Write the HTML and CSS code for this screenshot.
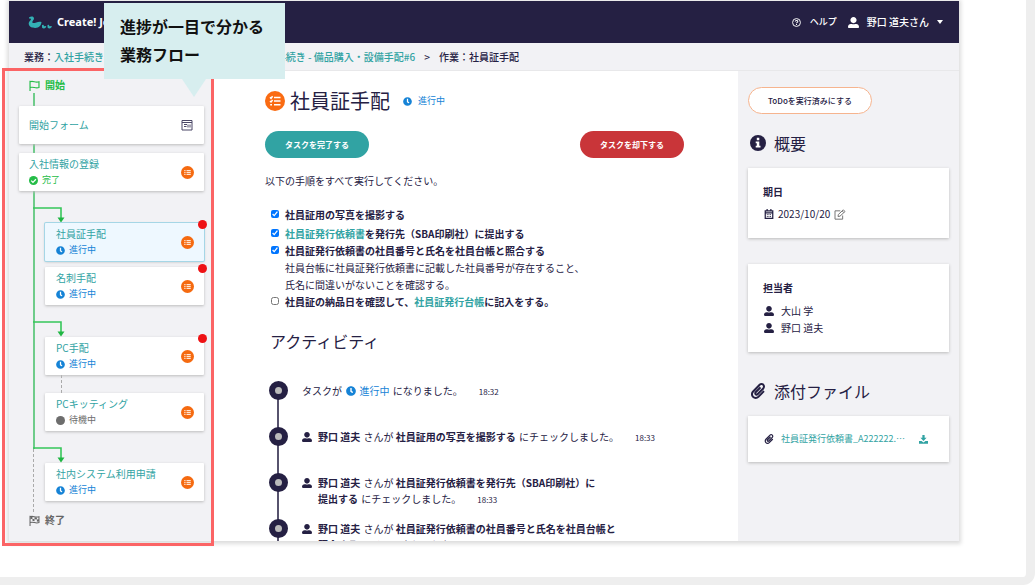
FILE: index.html
```html
<!DOCTYPE html>
<html lang="ja">
<head>
<meta charset="utf-8">
<meta name="viewport" content="width=device-width, initial-scale=1">
<title>社員証手配</title>
<link rel="stylesheet" href="styles.css">
</head>
<body>
<svg class="defs" aria-hidden="true">
  <symbol id="user" viewBox="0 0 512 512"><path d="M256 288c79.500 0 144-64.500 144-144S335.500 0 256 0 112 64.500 112 144s64.500 144 144 144zm128 32h-55.100c-22.200 10.200-46.900 16-72.900 16s-50.600-5.800-72.900-16H128C57.300 320 0 377.300 0 448v16c0 26.500 21.500 48 48 48h416c26.500 0 48-21.500 48-48v-16c0-70.700-57.300-128-128-128z"/></symbol>
  <symbol id="clock" viewBox="0 0 512 512"><path d="M256 8C119 8 8 119 8 256s111 248 248 248 248-111 248-248S393 8 256 8zm57.100 350.100L224.900 294c-3.100-2.300-4.900-5.900-4.900-9.700V116c0-6.600 5.400-12 12-12h48c6.600 0 12 5.400 12 12v137.700l63.500 46.200c5.400 3.900 6.500 11.400 2.600 16.800l-28.200 38.800c-3.900 5.300-11.400 6.500-16.800 2.600z"/></symbol>
  <symbol id="check" viewBox="0 0 16 16"><circle cx="8" cy="8" r="8"/><path d="M4 8.300l3 3 5.300-5.600" fill="none" stroke="#fff" stroke-width="2.200"/></symbol>
  <symbol id="dot" viewBox="0 0 16 16"><circle cx="8" cy="8" r="8"/></symbol>
  <symbol id="tasks" viewBox="0 0 20 20"><circle cx="10" cy="10" r="10" fill="#fa6b12"/><path d="M5 6.300l1 1 1.600-2M5 10l1 1 1.600-2M9 6.500h6.500M9 10h6.500M9 13.700h6.500M5.200 13.700h1.800" fill="none" stroke="#fff" stroke-width="1.500"/></symbol>
  <symbol id="tasks-small" viewBox="0 0 20 20"><circle cx="10" cy="10" r="10" fill="#f56a10"/><path d="M5 7h2M5 10h2M5 13h2M8.500 7H15M8.500 10H15M8.500 13H15" fill="none" stroke="#ffe6d4" stroke-width="1.800"/></symbol>
  <symbol id="clip" viewBox="0 0 448 512"><path d="M43.246 466.142c-58.430-60.289-57.341-157.511 1.386-217.581L254.392 34c44.316-45.332 116.351-45.336 160.671 0 43.890 44.894 43.943 117.329 0 162.276L232.214 383.128c-29.855 30.537-78.633 30.111-107.982-.998-28.275-29.970-27.368-77.473 1.452-106.953l143.743-146.835c6.182-6.314 16.312-6.422 22.626-.241l22.861 22.379c6.315 6.182 6.422 16.312.241 22.626L171.427 319.927c-4.932 5.045-5.236 13.428-.648 18.292 4.372 4.634 11.245 4.711 15.688.165l182.849-186.851c19.613-20.062 19.613-52.725-.011-72.798-19.189-19.627-49.957-19.637-69.154 0L90.390 293.295c-34.763 35.560-35.299 93.120-1.191 128.313 34.010 35.093 88.985 35.137 123.058.286l172.060-175.999c6.177-6.319 16.307-6.433 22.626-.256l22.877 22.364c6.319 6.177 6.434 16.307.256 22.626l-172.060 175.998c-59.576 60.938-155.943 60.216-214.770-.485z"/></symbol>
  <symbol id="connector" viewBox="0 0 46 32"><path d="M14 17H42V27" fill="none" stroke="#36c65a" stroke-width="1.600"/><path d="M38.500 26.500h7L42 31.500z" fill="#1fb643"/></symbol>
</svg>

<div class="frame">
  <div class="app">
    <header class="topbar">
      <a class="brand" href="#">
        <svg class="logo" viewBox="0 0 25 13" aria-hidden="true"><path d="M1 1.500C3 0 6 .2 6 2.600c0 1.400-1.600 2.300-1.700 3.500 0 1.600 2 1 4 .3 1.700-.5 3.400-1 5.200-.3-.3 3.500-2.500 5.900-6.300 5.900C3.300 12 .6 10.300.7 7.300.8 5.400 3 4.500 3 3.300 3 2.500 2 2.300 1 2.500zM14 9l1.500-.2.500 1.500 2.200-.3c0 1.600-.9 2.400-2.400 2.400-1.200 0-2-.8-1.800-2zM19.500 9l1.400-.2.500 1.500 2.400-.3c0 1.600-1 2.400-2.400 2.400-1.300 0-2-.8-1.900-2z"/></svg>
        <span>Create! Job</span>
      </a>
      <nav class="usernav">
        <a class="help" href="#"><svg class="i9" viewBox="0 0 16 16" aria-hidden="true"><circle cx="8" cy="8" r="7" fill="none" stroke="currentColor" stroke-width="1.700"/><path d="M5.700 6.300C5.800 3.600 10.400 3.700 10.300 6.300 10.200 7.800 8 7.900 8 9.500M8 10.700v1.700" fill="none" stroke="currentColor" stroke-width="1.800"/></svg>ヘルプ</a>
        <button class="account" type="button"><svg class="i11"><use href="#user"/></svg>野口 道夫さん<svg class="caret" viewBox="0 0 6 4"><path d="M0 0h6L3 4z"/></svg></button>
      </nav>
    </header>

    <nav class="crumbs">
      <span>業務：<a href="#">入社手続き - 備品購入・設備手配</a></span><span>&gt;</span>
      <span>業務：<a href="#">入社手続き - 備品購入・設備手配#6</a></span><span>&gt;</span>
      <span>作業：社員証手配</span>
    </nav>

    <div class="body">
      <section class="flow">
        <div class="trunk trunk-done">
          <div class="terminal start"><svg class="i11" viewBox="0 0 16 16"><path d="M1.500 1v15M1.500 2.500c5-2 7.500 2 13 0v8.500c-5.500 2-8-2-13 0" fill="none" stroke="currentColor" stroke-width="1.700"/></svg>開始</div>
          <div class="card form-card">
            <a class="card-title" href="#">開始フォーム</a>
            <svg class="form-icon" viewBox="0 0 12 12"><path d="M1 1.500h10v9.500H1zM1 3.500h10M3 5.500h3M3 7.500h2.500M7 5.500v3M9 5.500v3" fill="none" stroke="currentColor"/></svg>
          </div>
          <div class="card">
            <div><a class="card-title" href="#">入社情報の登録</a><div class="status done"><svg class="i9"><use href="#check"/></svg>完了</div></div>
            <svg class="i13"><use href="#tasks-small"/></svg>
          </div>
          <svg class="connector"><use href="#connector"/></svg>
          <div class="card sub selected">
            <div><a class="card-title" href="#">社員証手配</a><div class="status active"><svg class="i9"><use href="#clock"/></svg>進行中</div></div>
            <svg class="i13"><use href="#tasks-small"/></svg><i class="badge"></i>
          </div>
          <div class="card sub next">
            <div><a class="card-title" href="#">名刺手配</a><div class="status active"><svg class="i9"><use href="#clock"/></svg>進行中</div></div>
            <svg class="i13"><use href="#tasks-small"/></svg><i class="badge"></i>
          </div>
          <svg class="connector"><use href="#connector"/></svg>
          <div class="card sub">
            <div><a class="card-title" href="#">PC手配</a><div class="status active"><svg class="i9"><use href="#clock"/></svg>進行中</div></div>
            <svg class="i13"><use href="#tasks-small"/></svg><i class="badge"></i>
          </div>
          <div class="pending-link"></div>
          <div class="card sub">
            <div><a class="card-title" href="#">PCキッティング</a><div class="status waiting"><svg class="i9"><use href="#dot"/></svg>待機中</div></div>
            <svg class="i13"><use href="#tasks-small"/></svg>
          </div>
          <svg class="connector"><use href="#connector"/></svg>
        </div>
        <div class="trunk trunk-wait">
          <div class="card sub">
            <div><a class="card-title" href="#">社内システム利用申請</a><div class="status active"><svg class="i9"><use href="#clock"/></svg>進行中</div></div>
            <svg class="i13"><use href="#tasks-small"/></svg>
          </div>
          <div class="terminal end"><svg class="i11" viewBox="0 0 16 16"><path d="M1.500 1v15M1.500 2.500c5-2 7.500 2 13 0v8.500c-5.500 2-8-2-13 0" fill="none" stroke="currentColor" stroke-width="1.500"/><path d="M2 3l3-.5v3l3 .6v-3l3.500.6v3l3-.6v3l-3 .6v-3L8 6v3.200l-3-.9V5.500L2 6z" fill="currentColor"/></svg>終了</div>
        </div>
        <div class="callout">進捗が一目で分かる<br>業務フロー</div>
      </section>

      <main class="task">
        <div class="task-head">
          <svg class="i20"><use href="#tasks"/></svg>
          <h1>社員証手配</h1>
          <div class="status active"><svg class="i9"><use href="#clock"/></svg>進行中</div>
        </div>
        <div class="actions">
          <button class="btn btn-teal" type="button">タスクを完了する</button>
          <button class="btn btn-red" type="button">タスクを却下する</button>
        </div>
        <p class="intro">以下の手順をすべて実行してください。</p>
        <ul class="checks">
          <li><input type="checkbox" id="c1" checked><label for="c1">社員証用の写真を撮影する</label></li>
          <li><input type="checkbox" id="c2" checked><label for="c2"><a href="#">社員証発行依頼書</a>を発行先（SBA印刷社）に提出する</label></li>
          <li><input type="checkbox" id="c3" checked><div><label for="c3">社員証発行依頼書の社員番号と氏名を社員台帳と照合する</label><p>社員台帳に社員証発行依頼書に記載した社員番号が存在すること、<br>氏名に間違いがないことを確認する。</p></div></li>
          <li><input type="checkbox" id="c4"><label for="c4">社員証の納品日を確認して、<a href="#">社員証発行台帳</a>に記入をする。</label></li>
        </ul>
        <h2 class="activity-title">アクティビティ</h2>
        <ol class="timeline">
          <li><p>タスクが <svg class="i10 blue"><use href="#clock"/></svg> <span class="blue">進行中</span> になりました。<time>18:32</time></p></li>
          <li><svg class="i10"><use href="#user"/></svg><p><b>野口 道夫</b> さんが <b>社員証用の写真を撮影する</b> にチェックしました。<time>18:33</time></p></li>
          <li><svg class="i10"><use href="#user"/></svg><p><b>野口 道夫</b> さんが <b>社員証発行依頼書を発行先（SBA印刷社）に<br>提出する</b> にチェックしました。<time>18:33</time></p></li>
          <li><svg class="i10"><use href="#user"/></svg><p><b>野口 道夫</b> さんが <b>社員証発行依頼書の社員番号と氏名を社員台帳と<br>照合する</b> にチェックしました。<time>18:33</time></p></li>
        </ol>
      </main>

      <aside class="side">
        <button class="btn btn-outline" type="button">ToDoを実行済みにする</button>
        <h2><svg class="i16" viewBox="0 0 16 16"><circle cx="8" cy="8" r="8"/><path d="M6.800 2.800h2.500v2.400H6.800zM5.700 6.500h3.600v4.300h1.200v1.800H5.700v-1.800h1.100V8.300H5.700z" fill="#fff"/></svg>概要</h2>
        <section class="panel">
          <h3>期日</h3>
          <div class="due"><svg class="i10" viewBox="0 0 14 16"><path d="M1 3h12v12H1zM1 6h12M4 0v4M10 0v4" fill="none" stroke="currentColor" stroke-width="2"/><path d="M3.500 9h7M3.500 12h7" stroke="currentColor" stroke-width="1.400" stroke-dasharray="1.600 1"/></svg>2023/10/20<button class="edit" type="button" aria-label="編集"><svg class="i12" viewBox="0 0 18 16"><path d="M9.500 2.500H1.500v12.500h11.500V9.500M6 11l.5-3L14 1l2.500 2.500L9 10.500zM12.300 2.700l2.500 2.500" fill="none" stroke="currentColor" stroke-width="1.500"/></svg></button></div>
        </section>
        <section class="panel people">
          <h3>担当者</h3>
          <ul>
            <li><svg class="i10"><use href="#user"/></svg>大山 学</li>
            <li><svg class="i10"><use href="#user"/></svg>野口 道夫</li>
          </ul>
        </section>
        <h2><svg class="i16"><use href="#clip"/></svg>添付ファイル</h2>
        <section class="panel file">
          <svg class="i10"><use href="#clip"/></svg>
          <a href="#">社員証発行依頼書_A222222.⋯</a>
          <a class="download" href="#" aria-label="ダウンロード"><svg class="i9" viewBox="0 0 16 16"><path d="M6 0h4v5h3.500L8 10.500 2.500 5H6zM0 10.500h4.500L8 13.500l3.500-3H16V15.500H0z"/></svg></a>
        </section>
      </aside>
    </div>
  </div>
</div>
</body>
</html>
```
FILE: styles.css
```css
*, ::before, ::after { box-sizing: border-box; }

body {
  margin: 0;
  background: #fff;
  color: #252043;
  font: 10px/16px "Noto Sans CJK JP", sans-serif;
}

h1, h2, h3, p, ul, ol { margin: 0; padding: 0; }
ul, ol { list-style: none; }
a { color: #31a3a3; text-decoration: none; }
button { font: inherit; color: inherit; border: 0; background: none; padding: 0; }
svg { flex: none; fill: currentColor; }
.defs { display: none; }

.i9 { width: 9px; height: 9px; }
.i10 { width: 10px; height: 10px; }
.i11 { width: 11px; height: 11px; }
.i12 { width: 12px; height: 11px; }
.i13 { width: 13px; height: 13px; }
.i16 { width: 16px; height: 16px; }
.i20 { width: 20px; height: 20px; }
.blue { color: #1683d6; }

.frame {
  display: flex;
  height: calc(100vh - 3px);
  min-height: 480px;
  padding: 1px 67px 36px 9px;
  border: solid #eee;
  border-width: 0 9px 8px 0;
  border-radius: 0 0 12px 0;
}

.app {
  display: flex;
  flex: 1;
  flex-direction: column;
  min-width: 0;
  box-shadow: 0 1px 4px 2px #ddd;
}

.topbar {
  display: flex;
  flex: none;
  align-items: center;
  justify-content: space-between;
  height: 42px;
  padding: 0 16px 0 19px;
  background: #252043;
  color: #fff;
}
.brand { display: flex; align-items: center; gap: 4px; color: #fff; font: bold 11px/16px "Noto Sans", sans-serif; }
.logo { width: 25px; height: 13px; color: #33b1b5; }
.usernav { display: flex; gap: 11px; font-weight: 500; }
.help, .account { display: flex; align-items: center; color: #fff; }
.help { gap: 9px; font-size: 9px; }
.account { gap: 8px; }
.caret { width: 6px; height: 4px; }

.crumbs {
  display: flex;
  flex: none;
  gap: 9px;
  align-items: center;
  height: 28px;
  padding: 0 15px;
  border-bottom: 1px solid #e8e8ea;
  background: #f2f2f5;
  font-weight: 500;
  white-space: nowrap;
}

.body { display: flex; flex: 1; min-height: 0; background: #fff; }

/* Workflow column */
.flow {
  position: relative;
  flex: none;
  width: 203px;
  padding: 6px 8px 0 10px;
  background: #f2f2f5;
}
.flow::after {
  content: "";
  position: absolute;
  inset: -3px -2px -5px -7px;
  border: 3px solid #fb6465;
  pointer-events: none;
}
.trunk { position: relative; }
.trunk::before { content: ""; position: absolute; left: 14px; }
.trunk-done::before { top: 16px; bottom: 14px; width: 2px; background: #6fcc8a; }
.trunk-wait::before { top: -14px; bottom: 16px; border-left: 1px dashed #aaa; }

.terminal { display: flex; gap: 5px; align-items: center; padding-left: 10px; font-weight: bold; }
.start { color: #25bd48; }
.end { margin-top: 11px; color: #666; }

.card {
  position: relative;
  display: flex;
  align-items: center;
  justify-content: space-between;
  height: 38px;
  padding: 0 10px;
  border-radius: 1px;
  background: #fff;
  box-shadow: 0 1px 3px #bbb;
}
.card-title { display: block; }
.form-card { margin: 13px 0 9px; }
.form-icon { width: 12px; height: 12px; margin-right: 1px; color: #4b4766; }
.sub { margin-left: 26px; padding-left: 11px; }
.selected { background: #eef8ff; box-shadow: 0 0 0 1px #a5d6e6, 0 1px 3px #bbb; }
.next { margin-top: 6px; }
.badge {
  position: absolute;
  top: -3px;
  right: -3px;
  width: 9px;
  height: 9px;
  border-radius: 50%;
  background: #ee1114;
}
.status { display: flex; gap: 4px; align-items: center; font-size: 9px; }
.done { color: #25bd48; }
.active { color: #1683d6; }
.waiting { color: #6d6d6d; }
.connector { position: relative; display: block; width: 46px; height: 32px; }
.pending-link { width: 1px; height: 18px; margin-left: 42px; border-left: 1px dashed #aaa; }

.callout {
  position: absolute;
  z-index: 1;
  top: -68px;
  left: 95px;
  width: 181px;
  padding: 9px 16px 11px;
  background: #d7eeef;
  color: #111;
  font-size: 16px;
  font-weight: bold;
  line-height: 28px;
  white-space: nowrap;
}
.callout::after {
  content: "";
  position: absolute;
  top: 100%;
  left: 78px;
  border: solid transparent;
  border-width: 18px 12px 0;
  border-top-color: #d7eeef;
}

/* Task column */
.task { flex: 1; min-width: 0; padding: 15px 54px 0 53px; overflow: hidden; }
.task-head { display: flex; align-items: center; height: 30px; }
.task-head h1 { margin: 0 13px 0 5px; font-size: 20px; font-weight: 400; line-height: 30px; }
.task-head .status { gap: 6px; }
.actions { display: flex; justify-content: space-between; margin: 15px 0; }
.btn { width: 104px; height: 27px; border-radius: 14px; color: #fff; font-size: 8px; font-weight: bold; }
.btn-teal { background: #31a3a3; }
.btn-red { background: #c93539; }

.checks { padding: 17px 0 0 6px; line-height: 17px; }
.checks li { display: flex; gap: 6px; align-items: flex-start; }
.checks li:first-child { margin-bottom: 2px; }
.checks input { flex: none; width: 8px; height: 8px; margin: 4px 0 0; }
.checks label { font-weight: bold; }

.activity-title { padding: 19px 0 0 5px; font-size: 16px; font-weight: 400; line-height: 24px; }

.timeline { padding: 28px 0 0 4px; line-height: 16px; }
.timeline li {
  position: relative;
  display: flex;
  gap: 6px;
  height: 46px;
  padding: 2px 0 0 33px;
  white-space: nowrap;
}
.timeline li::before {
  content: "";
  position: absolute;
  left: 8px;
  top: 9px;
  width: 2px;
  height: 46px;
  background: #57536e;
}
.timeline li::after {
  content: "";
  position: absolute;
  left: 0;
  top: 0;
  width: 19px;
  height: 19px;
  border: 6px solid #252043;
  border-radius: 50%;
  background: #bbb;
}
.timeline li > svg { margin-top: 3px; }
.timeline p svg { margin-left: 2px; vertical-align: -1px; }
.timeline .blue, .timeline b { margin-right: 1px; }
.timeline time { margin-left: 16px; font-size: 8px; }

/* Summary column */
.side { flex: none; width: 221px; padding: 16px 10px 0; background: #f2f2f5; overflow: hidden; }
.btn-outline { width: 124px; border: 1px solid #f6b48e; background: #fff; color: #252043; font-weight: 500; }
.side h2 { display: flex; gap: 8px; align-items: center; padding: 17px 0 13px 2px; font-size: 16px; font-weight: 400; line-height: 24px; }
.side h2 svg { color: #252043; }
.panel { padding: 15px 15px 16px; background: #fff; box-shadow: 0 1px 3px #bbb; }
.panel h3 { margin-bottom: 6px; font-size: 10px; line-height: 17px; }
.due { display: flex; gap: 4px; align-items: center; margin-left: 1px; line-height: 16px; }
.edit { display: flex; color: #777; }
.people { margin-top: 26px; }
.people li { display: flex; gap: 7px; align-items: center; padding-left: 1px; line-height: 17px; }
.people + h2 { padding-top: 27px; }
.file { display: flex; gap: 7px; align-items: center; height: 46px; padding: 0 21px 0 16px; font-size: 9px; }
.download { display: flex; margin-left: auto; }
```
